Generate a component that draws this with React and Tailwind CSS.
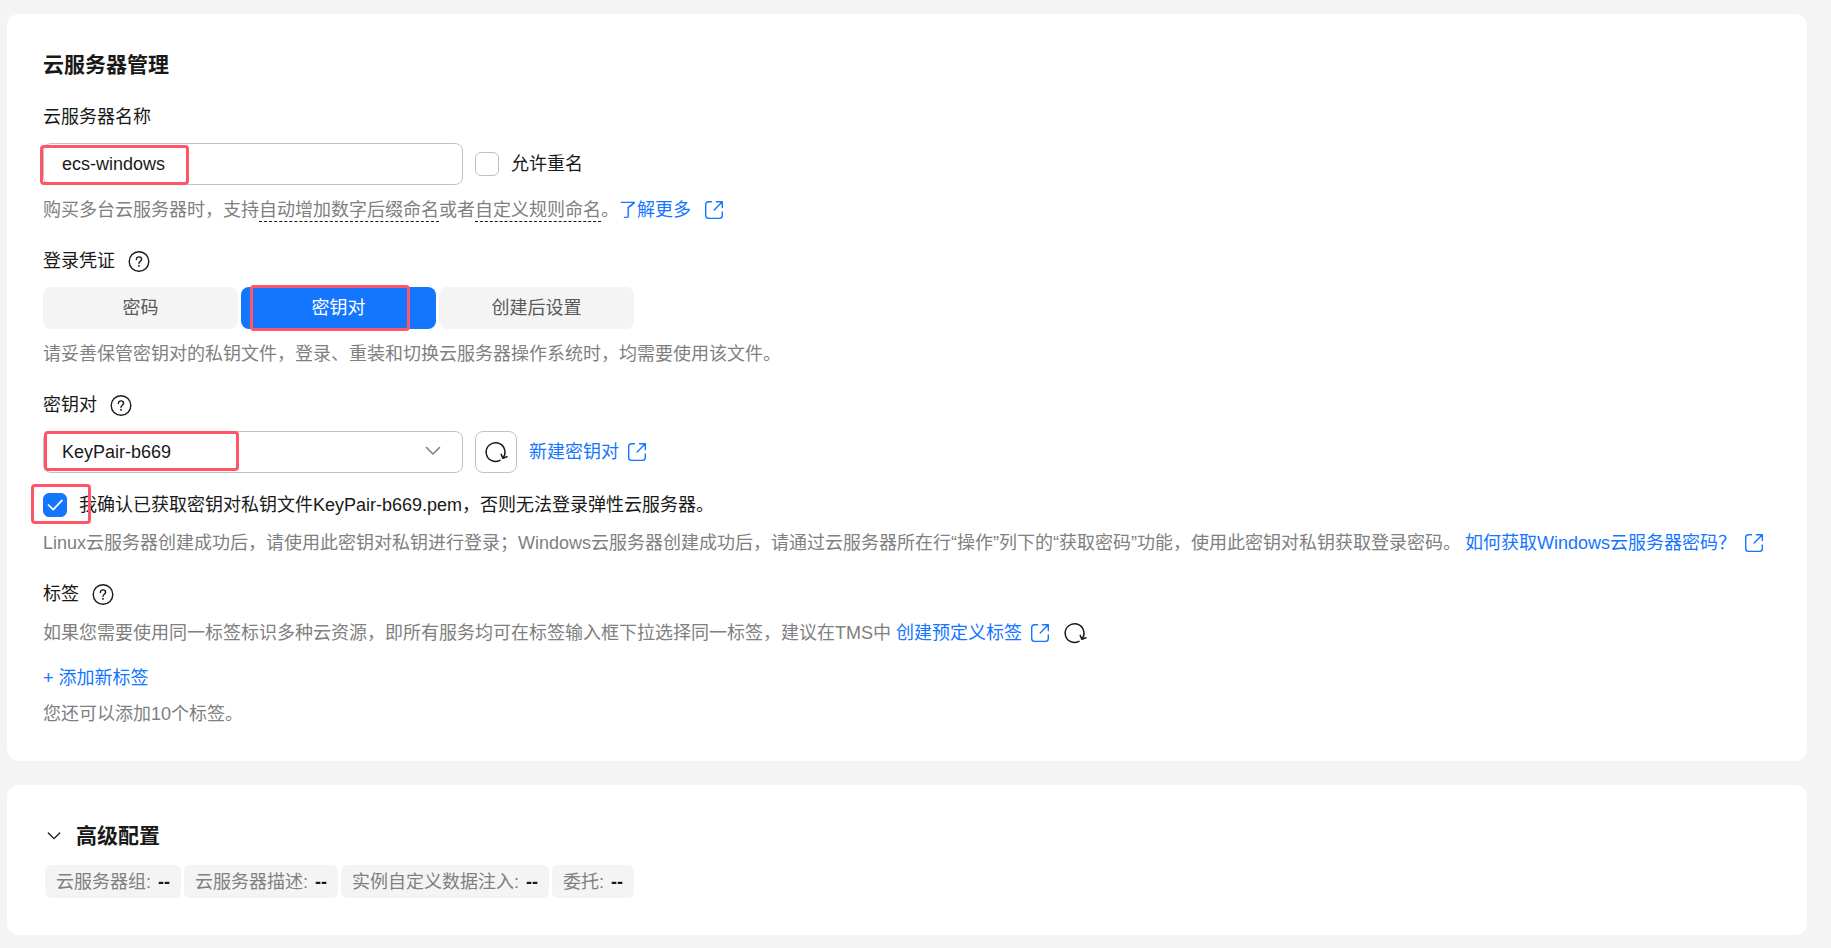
import { useState } from 'react';

const HelpIcon = () => (
  <svg width="22" height="22" viewBox="0 0 22 22" fill="none" stroke="#191919" strokeWidth="1.4" strokeLinecap="round">
    <circle cx="11" cy="11.5" r="9.8" />
    <path d="M8.4 9.5c0-1.6 1.1-2.6 2.6-2.6s2.6 1 2.6 2.4c0 1.8-2.6 2-2.6 3.9" />
    <path d="M11 15.7v.2" strokeWidth="1.7" />
  </svg>
);

const ExternalIcon = () => (
  <svg className="inline-block shrink-0" width="20" height="20" viewBox="0 0 20 20" fill="none" stroke="#1476ff" strokeWidth="1.4" strokeLinecap="round" strokeLinejoin="round">
    <path d="M7.5 1.8h-3a2.8 2.8 0 0 0-2.8 2.8v11a2.8 2.8 0 0 0 2.8 2.8h11a2.8 2.8 0 0 0 2.8-2.8V12" />
    <path d="M12.5 1.8h5.8v5.8M18 2.1l-7.8 7.8" />
  </svg>
);

const RefreshIcon = () => (
  <svg width="24" height="24" viewBox="0 0 24 24" fill="none" stroke="#191919" strokeWidth="1.5" strokeLinecap="round" strokeLinejoin="round">
    <path d="M16 20.4A9.4 9.4 0 1 1 19.2 17.6" />
    <path d="M17.2 14.4l1.6 3.8 4.2-1.4" />
  </svg>
);

const Chevron = ({ size, color }) => (
  <svg width={size} height={size} viewBox="0 0 16 16" fill="none" stroke={color} strokeWidth="1.6" strokeLinecap="round" strokeLinejoin="round">
    <path d="M1.5 4.5L8 11l6.5-6.5" />
  </svg>
);

const FieldLabel = ({ children, help, htmlFor }) => (
  <div className="flex items-center gap-[13px] h-6">
    <label htmlFor={htmlFor}>{children}</label>
    {help && (
      <button type="button" aria-label="帮助">
        <HelpIcon />
      </button>
    )}
  </div>
);

const Mark = ({ className }) => (
  <span className={`absolute border-3 border-[#ff5566] rounded pointer-events-none ${className}`} />
);

const loginTypes = ['密码', '密钥对', '创建后设置'];
const advanced = ['云服务器组', '云服务器描述', '实例自定义数据注入', '委托'];

export default function App() {
  const [name, setName] = useState('ecs-windows');
  const [allowSame, setAllowSame] = useState(false);
  const [loginType, setLoginType] = useState('密钥对');
  const [confirmed, setConfirmed] = useState(true);

  return (
    <main className="min-h-screen bg-[#f4f4f4] pl-[7px] pr-6 pt-3.5 pb-3 flex flex-col gap-6 font-['Liberation_Sans','Noto_Sans_CJK_SC',sans-serif] font-normal text-lg leading-6 text-[#191919]">
      {/* 云服务器管理 */}
      <section className="bg-white rounded-xl px-9 py-[35px]">
        <h2 className="text-[21px] leading-8 font-bold">云服务器管理</h2>

        <div className="mt-6">
          <FieldLabel htmlFor="server-name">云服务器名称</FieldLabel>
          <div className="mt-3.5 flex items-center gap-3">
            <div className="relative w-[420px]">
              <input
                id="server-name"
                className="w-full h-[42px] px-[18px] border border-[#c2c2c2] rounded-lg outline-none"
                value={name}
                onChange={(e) => setName(e.target.value)}
              />
              <Mark className="-left-[3px] top-0.5 w-[149px] h-10" />
            </div>
            <label className="flex items-center gap-3">
              <input
                type="checkbox"
                className="appearance-none size-6 border border-[#c2c2c2] rounded-md checked:bg-[#1476ff]"
                checked={allowSame}
                onChange={() => setAllowSame(!allowSame)}
              />
              允许重名
            </label>
          </div>
          <p className="mt-[13px] flex items-center h-6 text-[#808080]">
            购买多台云服务器时，支持
            <span className="border-b border-dashed border-[#191919] leading-[22px]">自动增加数字后缀命名</span>
            或者
            <span className="border-b border-dashed border-[#191919] leading-[22px]">自定义规则命名</span>
            。
            <a href="#more" className="flex items-center gap-[13px] text-[#1476ff]">
              了解更多 <ExternalIcon />
            </a>
          </p>
        </div>

        {/* 登录凭证 */}
        <div className="mt-[27px]">
          <FieldLabel help>登录凭证</FieldLabel>
          <div className="mt-3.5 flex gap-[3px]">
            {loginTypes.map((type) => (
              <button
                key={type}
                type="button"
                onClick={() => setLoginType(type)}
                className={`relative w-[195px] h-[42px] rounded-lg ${loginType === type ? 'bg-[#1476ff] text-white' : 'bg-[#f4f4f4] text-[#595959]'}`}
              >
                {type}
                {type === '密钥对' && <Mark className="left-[9px] -top-0.5 w-40 h-[46px]" />}
              </button>
            ))}
          </div>
          <p className="mt-[13px] text-[#808080]">
            请妥善保管密钥对的私钥文件，登录、重装和切换云服务器操作系统时，均需要使用该文件。
          </p>
        </div>

        {/* 密钥对 */}
        <div className="mt-[27px]">
          <FieldLabel help htmlFor="key-pair">密钥对</FieldLabel>
          <div className="mt-3.5 flex items-center gap-3">
            <div className="relative w-[420px]">
              <select
                id="key-pair"
                className="block appearance-none w-full h-[42px] px-[18px] bg-white border border-[#c2c2c2] rounded-lg outline-none"
              >
                <option>KeyPair-b669</option>
              </select>
              <span className="absolute right-[22px] top-3 pointer-events-none">
                <Chevron size={16} color="#808080" />
              </span>
              <Mark className="left-px top-0 w-[195px] h-10" />
            </div>
            <button
              type="button"
              aria-label="刷新"
              className="size-[42px] flex items-center justify-center border border-[#c2c2c2] rounded-lg"
            >
              <RefreshIcon />
            </button>
            <a href="#new-key" className="flex items-center gap-2 text-[#1476ff]">
              新建密钥对 <ExternalIcon />
            </a>
          </div>
          <div className="relative mt-5">
            <label className="flex items-center gap-3">
              <span className="relative size-6">
                <input
                  type="checkbox"
                  className="block appearance-none size-6 border border-[#c2c2c2] rounded-md checked:bg-[#1476ff] checked:border-[#1476ff]"
                  checked={confirmed}
                  onChange={() => setConfirmed(!confirmed)}
                />
                <svg className="absolute inset-0 pointer-events-none" width="24" height="24" viewBox="0 0 24 24" fill="none" stroke="white" strokeWidth="1.7" strokeLinecap="round" strokeLinejoin="round">
                  <path d="M5.5 12l4.7 4.7L19 7.4" />
                </svg>
              </span>
              我确认已获取密钥对私钥文件KeyPair-b669.pem，否则无法登录弹性云服务器。
            </label>
            <Mark className="-left-3 -top-[9px] w-[60px] h-10" />
          </div>
          <div className="mt-3.5 flex flex-wrap items-center gap-x-1 text-[#808080]">
            <p>Linux云服务器创建成功后，请使用此密钥对私钥进行登录；Windows云服务器创建成功后，请通过云服务器所在行“操作”列下的“获取密码”功能，使用此密钥对私钥获取登录密码。</p>
            <a href="#password" className="flex items-center gap-2 text-[#1476ff]">
              如何获取Windows云服务器密码？ <ExternalIcon />
            </a>
          </div>
        </div>

        {/* 标签 */}
        <div className="mt-[27px]">
          <FieldLabel help>标签</FieldLabel>
          <div className="mt-[15px] flex items-center gap-[5px] text-[#808080]">
            如果您需要使用同一标签标识多种云资源，即所有服务均可在标签输入框下拉选择同一标签，建议在TMS中
            <a href="#tms" className="flex items-center gap-2 text-[#1476ff]">
              创建预定义标签 <ExternalIcon />
            </a>
            <button type="button" aria-label="刷新标签" className="ml-2">
              <RefreshIcon />
            </button>
          </div>
          <button type="button" className="block mt-[21px] text-[#1476ff]">+ 添加新标签</button>
          <p className="mt-3 text-[#808080]">您还可以添加10个标签。</p>
        </div>
      </section>

      {/* 高级配置 */}
      <section className="bg-white rounded-xl px-[38px] pt-[35px] pb-[37px]">
        <h2 className="text-[21px] leading-8 font-bold">
          <button type="button" className="flex items-center gap-[15px] pl-0.5">
            <Chevron size={14} color="#191919" />
            高级配置
          </button>
        </h2>
        <ul className="mt-[13px] flex gap-[3px]">
          {advanced.map((item) => (
            <li key={item} className="h-[33px] px-[11px] flex items-center gap-[7px] rounded-md bg-[#f4f4f4] text-[#808080]">
              {item}: <span className="text-[#191919] font-bold">--</span>
            </li>
          ))}
        </ul>
      </section>
    </main>
  );
}
